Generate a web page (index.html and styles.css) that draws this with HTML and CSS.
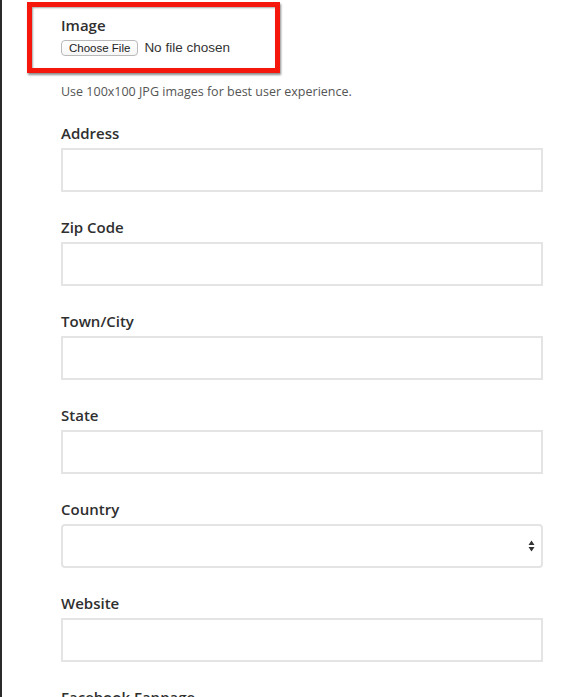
FILE: index.html
```html
<!DOCTYPE html>
<html>
<head>
<meta charset="utf-8">
<link rel="stylesheet" href="styles.css">
</head>
<body>
<div class="page">
  <form class="form">
    <div class="field field-image">
      <label class="label">Image</label>
      <div class="file-row">
        <span class="file-btn">Choose File</span>
        <span class="file-name">No file chosen</span>
      </div>
    </div>
    <p class="help">Use 100x100 JPG images for best user experience.</p>
    <div class="field">
      <label class="label">Address</label>
      <div class="input"></div>
    </div>
    <div class="field">
      <label class="label">Zip Code</label>
      <div class="input"></div>
    </div>
    <div class="field">
      <label class="label">Town/City</label>
      <div class="input"></div>
    </div>
    <div class="field">
      <label class="label">State</label>
      <div class="input"></div>
    </div>
    <div class="field">
      <label class="label">Country</label>
      <div class="input select">
        <svg class="arrows" width="7" height="12" viewBox="0 0 7 12"><path d="M3.5 0.5 L6.5 5 L0.5 5 Z M3.5 11.5 L6.5 7 L0.5 7 Z" fill="#333"/></svg>
      </div>
    </div>
    <div class="field">
      <label class="label">Website</label>
      <div class="input"></div>
    </div>
    <div class="field">
      <label class="label">Facebook Fanpage</label>
      <div class="input"></div>
    </div>
  </form>
  <div class="highlight"></div>
</div>
</body>
</html>
```

FILE: styles.css
```css
html, body {
  margin: 0;
  padding: 0;
  background: #fff;
}
body {
  font-family: "Open Sans", "Liberation Sans", sans-serif;
  color: #333;
  height: 697px;
  overflow: hidden;
}
.page {
  position: relative;
  border-left: 2px solid #2b2b2b;
  min-height: 697px;
  box-sizing: border-box;
}
.form {
  padding: 14px 0 0 59px;
  width: 482px;
  display: flex;
  flex-direction: column;
}
.field {
  display: flex;
  flex-direction: column;
  margin-bottom: 24px;
}
.field-image {
  margin-bottom: 0;
}
.label {
  font-size: 15px;
  font-weight: 600;
  line-height: 20px;
  color: #2f2f2f;
  margin-bottom: 5px;
  margin-top: 1px;
}
.field-image .label {
  margin-bottom: 4px;
}
.file-row {
  display: flex;
  align-items: center;
  gap: 6px;
  height: 17px;
}
.file-btn {
  font-family: "Liberation Sans", Arial, sans-serif;
  font-size: 11.5px;
  line-height: 14px;
  color: #222;
  background: linear-gradient(#fff, #f6f6f6);
  border: 1px solid #b9b9b9;
  border-radius: 4px;
  padding: 0 7px;
  height: 14px;
}
.file-name {
  font-family: "Liberation Sans", Arial, sans-serif;
  font-size: 13.5px;
  color: #333;
}
.help {
  margin: 27px 0 21px;
  font-size: 12.5px;
  line-height: 18px;
  color: #555;
}
.input {
  height: 44px;
  border: 2px solid #e4e4e4;
  box-sizing: border-box;
  background: #fff;
}
.select {
  border-radius: 4px;
  display: flex;
  align-items: center;
  justify-content: flex-end;
  padding-right: 6px;
}
.highlight {
  position: absolute;
  left: 25px;
  top: 2px;
  width: 253px;
  height: 71px;
  border: 5px solid #f5160c;
  box-sizing: border-box;
  box-shadow: 1px 2px 2px rgba(0,0,0,0.45), inset 1px 1px 2px rgba(0,0,0,0.35);
}
```
